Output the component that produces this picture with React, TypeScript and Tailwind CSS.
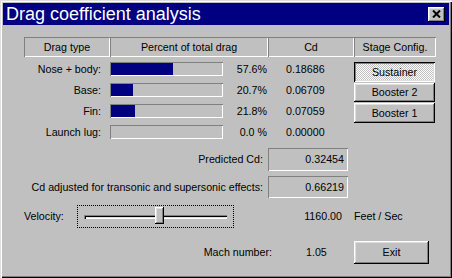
import React from 'react';

const rows = [
  { label: 'Nose + body:', pct: 57.6, pctText: '57.6%', cd: '0.18686' },
  { label: 'Base:', pct: 20.7, pctText: '20.7%', cd: '0.06709' },
  { label: 'Fin:', pct: 21.8, pctText: '21.8%', cd: '0.07059' },
  { label: 'Launch lug:', pct: 0, pctText: '0.0 %', cd: '0.00000' },
];

const raised =
  'shadow-[inset_-1px_-1px_#000,inset_1px_1px_#fff,inset_-2px_-2px_#808080,inset_2px_2px_#dfdfdf]';
const sunken = 'shadow-[inset_1px_1px_#808080,inset_-1px_-1px_#fff]';

export default function App() {
  return (
    <div className="w-[452px] h-[278px] bg-[#c0c0c0] p-[3px] shadow-[inset_1px_1px_#dfdfdf,inset_2px_2px_#fff,inset_-1px_-1px_#000,inset_-2px_-2px_#808080] font-['Liberation_Sans',Arial,sans-serif] text-[10.7px] text-black leading-none">
      {/* Title bar */}
      <div className="h-[22px] bg-[#000080] flex items-center justify-between pl-[3px] pr-[4px]">
        <span className="text-[18px] text-white leading-none">Drag coefficient analysis</span>
        <div className={`w-[17px] h-[15px] bg-[#c0c0c0] flex items-center justify-center ${raised}`}>
          <svg width="9" height="8" viewBox="0 0 9 8">
            <path d="M1 0.5 L8 7.5 M8 0.5 L1 7.5" stroke="#000" strokeWidth="2" />
          </svg>
        </div>
      </div>

      <div className="pl-[21px] pt-[12px]">
        {/* Header */}
        <div className="flex w-[412px] h-[20px]">
          <div className={`w-[86px] flex items-center justify-center ${sunken}`}>Drag type</div>
          <div className={`w-[158px] flex items-center justify-center ${sunken}`}>Percent of total drag</div>
          <div className={`w-[86px] flex items-center justify-center ${sunken}`}>Cd</div>
          <div className={`w-[82px] flex items-center justify-center ${sunken}`}>Stage Config.</div>
        </div>

        {/* Rows + stage buttons */}
        <div className="flex mt-[5px]">
          <div className="w-[330px] flex flex-col gap-[7px]">
            {rows.map(r => (
              <div key={r.label} className="flex items-center h-[14px]">
                <div className="w-[86px] text-right pr-[9px]">{r.label}</div>
                <div className={`w-[113px] h-[14px] p-[1px] ${sunken}`}>
                  <div className="h-full bg-[#000080]" style={{ width: `${(r.pct * 108) / 100}px` }} />
                </div>
                <div className="w-[44px] text-right">{r.pctText}</div>
                <div className="w-[87px] pl-[19px]">{r.cd}</div>
              </div>
            ))}
          </div>
          <div className="w-[81px] flex flex-col gap-[1px]">
            <div className="h-[20px] flex items-center justify-center bg-[repeating-conic-gradient(#fff_0_25%,#c0c0c0_0_50%)] bg-[length:2px_2px] shadow-[inset_1px_1px_#000,inset_-1px_-1px_#fff,inset_2px_2px_#808080,inset_-2px_-2px_#dfdfdf]">
              Sustainer
            </div>
            <div className={`h-[19px] flex items-center justify-center ${raised}`}>Booster 2</div>
            <div className={`h-[20px] flex items-center justify-center ${raised}`}>Booster 1</div>
          </div>
        </div>

        {/* Totals */}
        <div className="flex items-center mt-[9px] h-[23px]">
          <div className="w-[244px] text-right pr-[5px]">Predicted Cd:</div>
          <div className={`w-[80px] h-[23px] flex items-center justify-end pr-[4px] ${sunken}`}>0.32454</div>
        </div>
        <div className="flex items-center mt-[5px] h-[22px]">
          <div className="w-[244px] text-right pr-[5px]">Cd adjusted for transonic and supersonic effects:</div>
          <div className={`w-[80px] h-[22px] flex items-center justify-end pr-[4px] ${sunken}`}>0.66219</div>
        </div>

        {/* Velocity */}
        <div className="flex items-center mt-[7px] h-[23px]">
          <div className="w-[53px]">Velocity:</div>
          <div className="relative w-[157px] h-[23px] border border-dotted border-black flex items-center px-[6px]">
            <div className="w-full h-[4px] bg-[#c0c0c0] shadow-[inset_1px_1px_#808080,inset_2px_2px_#000,inset_-1px_-1px_#fff,inset_-2px_-2px_#dfdfdf]" />
            <div className={`absolute left-[77px] top-[1px] w-[9px] h-[17px] bg-[#c0c0c0] ${raised}`} />
          </div>
          <div className="w-[108px] text-right">1160.00</div>
          <div className="ml-[12px]">Feet / Sec</div>
        </div>

        {/* Mach + Exit */}
        <div className="flex items-center mt-[13px] h-[23px]">
          <div className="w-[248px] text-right">Mach number:</div>
          <div className="w-[48px] ml-[34px]">1.05</div>
          <div className={`w-[75px] h-[23px] flex items-center justify-center ${raised}`}>Exit</div>
        </div>
      </div>
    </div>
  );
}
